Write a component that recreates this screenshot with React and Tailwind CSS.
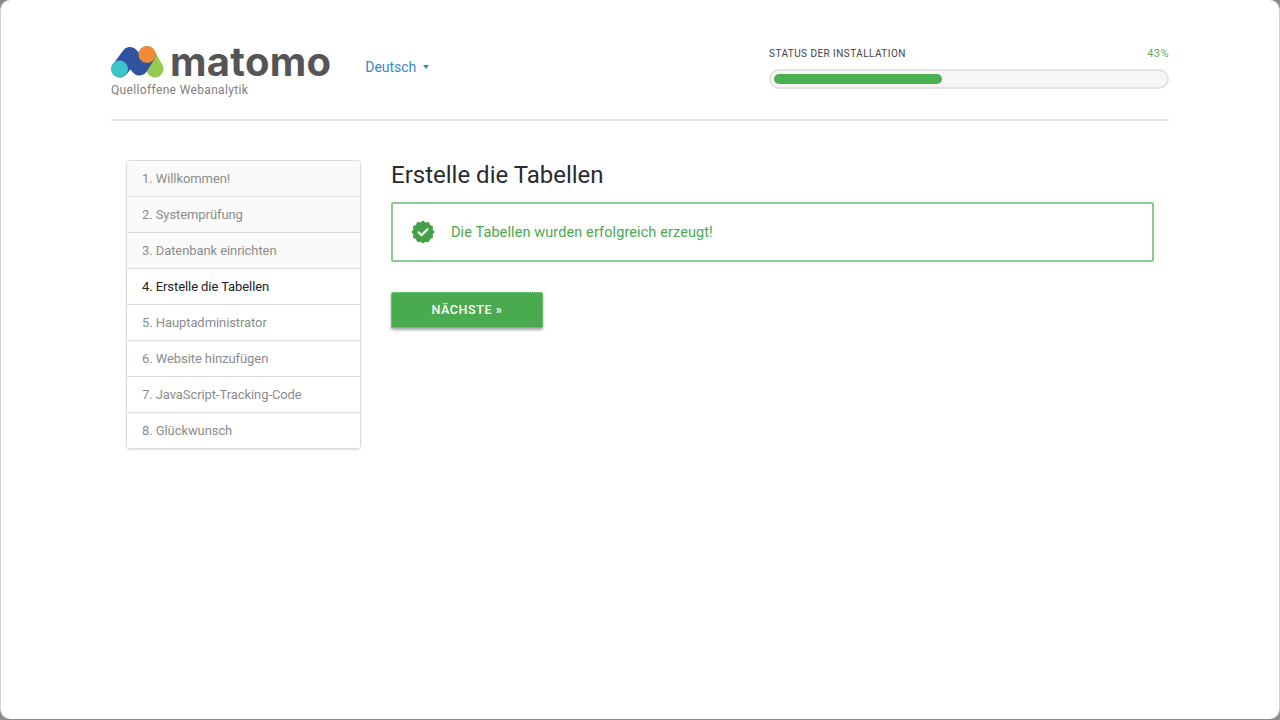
const steps = [
  "1. Willkommen!",
  "2. Systemprüfung",
  "3. Datenbank einrichten",
  "4. Erstelle die Tabellen",
  "5. Hauptadministrator",
  "6. Website hinzufügen",
  "7. JavaScript-Tracking-Code",
  "8. Glückwunsch",
];

function Logo() {
  return (
    <svg width="56" height="33" viewBox="0 0 56 33" className="shrink-0">
      <path d="M36 9 L44 23" stroke="#95c94f" strokeWidth="17" strokeLinecap="round" fill="none" />
      <path d="M9 23 L19 9.5 L28.5 21 L36 9" stroke="#3152a0" strokeWidth="17" strokeLinecap="round" strokeLinejoin="round" fill="none" />
      <circle cx="8.5" cy="23" r="8.5" fill="#3bc4c9" />
      <circle cx="36" cy="8.5" r="8.5" fill="#f28a36" />
    </svg>
  );
}

function Badge() {
  return (
    <svg width="24" height="24" viewBox="0 0 24 24" className="shrink-0">
      <path
        fill="#43a047"
        d="M12 0.5l2.6 1.9 3.2-.3 1.3 2.9 2.9 1.3-.3 3.2 1.9 2.5-1.9 2.6.3 3.2-2.9 1.3-1.3 2.9-3.2-.3L12 23.5l-2.6-1.8-3.2.3-1.3-2.9-2.9-1.3.3-3.2L.5 12l1.8-2.5-.3-3.2 2.9-1.3 1.3-2.9 3.2.3z"
      />
      <path d="M7.5 12.3l3 3 6-6" stroke="#fff" strokeWidth="2.2" fill="none" strokeLinecap="round" strokeLinejoin="round" />
    </svg>
  );
}

export default function App() {
  return (
    <div className="h-[720px] w-[1280px] overflow-hidden bg-[#8c8c8c] font-['Roboto',sans-serif]">
      <div className="h-[719px] rounded-[10px] border-x border-[#d4d4d4] bg-white px-[110px] pt-[46px]">
        {/* HEADER */}
        <div className="flex h-[75px] items-start justify-between border-b-2 border-[#e6e6e6]">
          <div className="flex items-start">
            <div>
              <div className="flex h-[32px] items-center gap-[3px]">
                <Logo />
                <span className="font-['Inter',sans-serif] text-[40px] leading-[32px] font-bold tracking-[0.3px] text-[#555555]">
                  matomo
                </span>
              </div>
              <div className="mt-[5px] text-[12px] leading-[15px] tracking-[0.35px] text-[#808080]">
                Quelloffene Webanalytik
              </div>
            </div>
            <div className="mt-[13px] ml-[34px] flex items-center gap-[7px] text-[14px] leading-[17px] tracking-[-0.05px] text-[#3a87c8]">
              Deutsch
              <span className="mt-[-2px] h-0 w-0 border-x-[3px] border-t-[4px] border-x-transparent border-t-[#3a87c8]" />
            </div>
          </div>
          <div className="w-[400px]">
            <div className="flex h-[15px] items-center justify-between text-[10px] tracking-[0.45px] text-[#444444]">
              <span>STATUS DER INSTALLATION</span>
              <span className="mt-[1px] text-[11px] text-[#5bab5f]">43%</span>
            </div>
            <div className="mt-[8px] h-[20px] rounded-full border-2 border-[#e3e3e3] bg-[#f6f6f6] px-[3px] py-[3px]">
              <div className="h-[10px] w-[168px] rounded-full bg-[#4caf50]" />
            </div>
          </div>
        </div>

        {/* BODY */}
        <div className="mt-[39px] flex items-start px-[15px]">
          <div className="w-[235px] shrink-0 overflow-hidden rounded-[4px] border border-[#dcdcdc] shadow-[0_1px_2px_rgba(0,0,0,0.12)]">
            {steps.map((s, i) => (
              <div
                key={s}
                className={
                  "flex items-center border-[#dcdcdc] px-[15px] text-[13px] tracking-[-0.08px] " +
                  (i === 0 ? "h-[35px] " : "h-[36px] border-t ") +
                  (i === 3 ? "bg-white text-[#222222]" : i < 3 ? "bg-[#fafafa] text-[#8c8c8c]" : "bg-white text-[#8c8c8c]")
                }
              >
                {s}
              </div>
            ))}
          </div>

          <div className="ml-[30px] flex-1">
            <h2 className="mt-[1px] text-[24px] leading-[28px] text-[#2b2b2b]">Erstelle die Tabellen</h2>
            <div className="mt-[13px] flex h-[60px] items-center gap-[16px] rounded-[2px] border-2 border-[#8ccb8f] pl-[18px] text-[14.5px] tracking-[0.1px] text-[#4ba750]">
              <Badge />
              <span className="mt-[1px]">Die Tabellen wurden erfolgreich erzeugt!</span>
            </div>
            <button className="mt-[30px] flex h-[36px] w-[152px] items-center justify-center rounded-[2px] border border-dotted border-[#8fcb92] bg-[#4aaa4f] pt-[1px] text-[12.5px] font-medium tracking-[0.6px] text-white shadow-[0_2px_3px_rgba(0,0,0,0.35)]">
              NÄCHSTE »
            </button>
          </div>
        </div>
      </div>
    </div>
  );
}
